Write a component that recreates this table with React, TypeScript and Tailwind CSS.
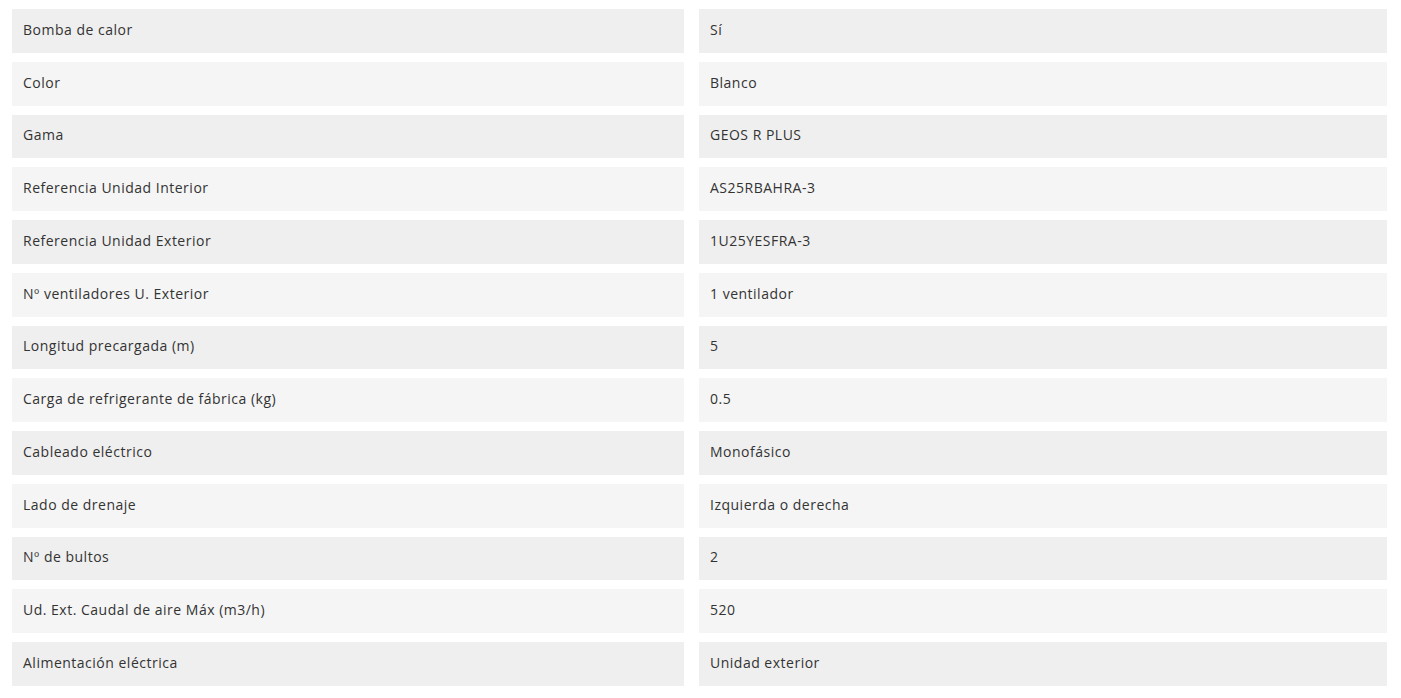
const specs: [string, string][] = [
  ["Bomba de calor", "Sí"],
  ["Color", "Blanco"],
  ["Gama", "GEOS R PLUS"],
  ["Referencia Unidad Interior", "AS25RBAHRA-3"],
  ["Referencia Unidad Exterior", "1U25YESFRA-3"],
  ["Nº ventiladores U. Exterior", "1 ventilador"],
  ["Longitud precargada (m)", "5"],
  ["Carga de refrigerante de fábrica (kg)", "0.5"],
  ["Cableado eléctrico", "Monofásico"],
  ["Lado de drenaje", "Izquierda o derecha"],
  ["Nº de bultos", "2"],
  ["Ud. Ext. Caudal de aire Máx (m3/h)", "520"],
  ["Alimentación eléctrica", "Unidad exterior"],
]

export default function App() {
  return (
    <div className="min-h-[698px] w-[1401px] bg-white pl-[12px] pt-[9px] font-['Open_Sans',sans-serif] text-[14px] tracking-[0.5px] text-[#333333]">
      <div className="grid grid-cols-[672px_688px] gap-x-[15px] gap-y-[9px]">
        {specs.map(([label, value], i) => {
          const bg = i % 2 === 0 ? "bg-[#efefef]" : "bg-[#f5f5f5]"
          return [
            <div key={`l${i}`} className={`flex h-[43.75px] items-center pb-[3px] pl-[11px] ${bg}`}>
              {label}
            </div>,
            <div key={`v${i}`} className={`flex h-[43.75px] items-center pb-[3px] pl-[11px] ${bg}`}>
              {value}
            </div>,
          ]
        })}
      </div>
    </div>
  )
}
